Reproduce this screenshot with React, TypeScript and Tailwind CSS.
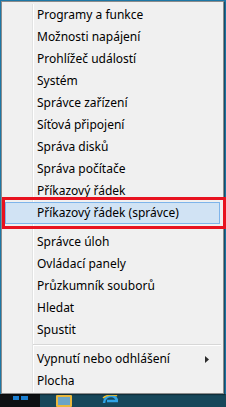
import React from 'react'

type Entry = {label: string; sub?: boolean; active?: boolean} | 'sep'

const entries: Entry[] = [
  {label: 'Programy a funkce'},
  {label: 'Možnosti napájení'},
  {label: 'Prohlížeč událostí'},
  {label: 'Systém'},
  {label: 'Správce zařízení'},
  {label: 'Síťová připojení'},
  {label: 'Správa disků'},
  {label: 'Správa počítače'},
  {label: 'Příkazový řádek'},
  {label: 'Příkazový řádek (správce)', active: true},
  'sep',
  {label: 'Správce úloh'},
  {label: 'Ovládací panely'},
  {label: 'Průzkumník souborů'},
  {label: 'Hledat'},
  {label: 'Spustit'},
  'sep',
  {label: 'Vypnutí nebo odhlášení', sub: true},
  {label: 'Plocha'},
]

export default function App() {
  return (
    <div
      className="relative flex h-[407px] w-[226px] flex-col overflow-hidden bg-[#1d77a6]"
      style={{fontFamily: '"Noto Sans", "Open Sans", sans-serif'}}
    >
      <div className="h-px" />
      <div className="flex">
        <div className="relative ml-px h-[393px] w-[223px] border border-[#8b8b8b] bg-[#f0f0f0] pt-[2px] shadow-[1px_1px_1px_rgba(0,0,0,0.35)]">
          {/* gutter line */}
          <div className="absolute top-[2px] bottom-[1px] left-[30px] w-px bg-[#e2e3e3]" />
          <div className="absolute top-[2px] bottom-[1px] left-[31px] w-px bg-white" />
          <ul className="relative flex flex-col">
            {entries.map((e, i) => {
              if (e === 'sep') {
                return (
                  <li key={i} className="flex h-[7px] items-center pl-[31px] pr-[2px]">
                    <div className="w-full border-t border-b border-t-[#d7d7d7] border-b-white" />
                  </li>
                )
              }
              return (
                <li
                  key={i}
                  className={
                    e.active
                      ? 'mx-[3px] flex h-[22px] items-center border border-[#7eb4ea] bg-[#d1e3f4] pl-[31px] text-[12px] text-black'
                      : 'flex h-[22px] items-center pl-[35px] pr-[14px] text-[12px] text-black'
                  }
                >
                  <span className="flex-1">{e.label}</span>
                  {e.sub && (
                    <svg width="4" height="7" viewBox="0 0 4 7" className="mr-[0px]">
                      <path d="M0 0 L4 3.5 L0 7 Z" fill="#2b2b2b" />
                    </svg>
                  )}
                </li>
              )
            })}
          </ul>
        </div>
      </div>

      {/* taskbar */}
      <div className="flex flex-1">
        <div className="flex w-[40px] items-start justify-center bg-[#0d1013] pt-[2px]">
          <div className="grid grid-cols-2 gap-[1px]">
            <div className="h-[4px] w-[6px] bg-[#1b7fd1]" />
            <div className="h-[4px] w-[7px] bg-[#1b7fd1]" />
          </div>
        </div>
        <div className="flex flex-1 items-start gap-[30px] bg-[#17475a] pl-[16px] pt-[1px]">
          <div className="relative h-[12px] w-[16px] rounded-[1px] border-2 border-[#e9b73c] bg-[#6ba4c6]" />
          <svg width="16" height="12" viewBox="0 0 16 12">
            <path d="M2 8 C2 3 6 1 9 1 C13 1 15 4 15 6 L5 6" fill="none" stroke="#2fa3e6" strokeWidth="2.5" />
            <path d="M1 3 C4 0 12 -1 15 1" fill="none" stroke="#f1c232" strokeWidth="1.5" />
          </svg>
        </div>
      </div>

      {/* red highlight frame */}
      <div className="pointer-events-none absolute top-[197px] left-[2px] h-[32px] w-[224px] border-[3px] border-[#e8121f]" />
    </div>
  )
}
